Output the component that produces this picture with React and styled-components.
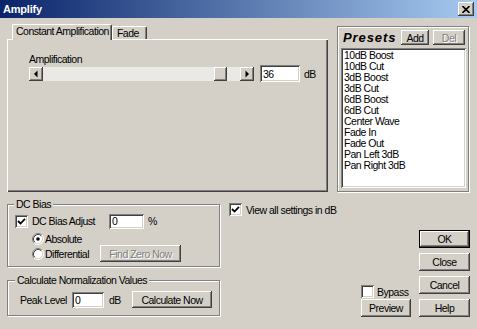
import React from 'react';
import styled, { createGlobalStyle, css } from 'styled-components';

const FACE = '#d4d0c8';

const GlobalStyle = createGlobalStyle`
  html, body {
    margin: 0;
    padding: 0;
    background: ${FACE};
  }
  body {
    font-family: "Liberation Sans", Arial, sans-serif;
    font-size: 10.5px;
    letter-spacing: -0.5px;
    color: #000;
  }
  * { box-sizing: border-box; }
`;

const raised = css`
  box-shadow: inset -1px -1px #404040, inset 1px 1px #fff, inset -2px -2px #808080, inset 2px 2px ${FACE};
`;

const sunken = css`
  box-shadow: inset 1px 1px #808080, inset -1px -1px #fff, inset 2px 2px #404040, inset -2px -2px ${FACE};
`;

const presets = [
  '10dB Boost', '10dB Cut', '3dB Boost', '3dB Cut', '6dB Boost', '6dB Cut',
  'Center Wave', 'Fade In', 'Fade Out', 'Pan Left 3dB', 'Pan Right 3dB',
];

const amp = { value: 36, min: -40, max: 42 };

const Window = styled.div`
  width: 477px;
  height: 329px;
  background: ${FACE};
  display: flex;
  flex-direction: column;
  overflow: hidden;
`;

const TitleBar = styled.div`
  height: 18px;
  flex-shrink: 0;
  display: flex;
  align-items: center;
  justify-content: space-between;
  padding: 0 3px;
  background: linear-gradient(to right, #0a246a, #a6caf0);
`;

const Title = styled.span`
  font-weight: bold;
  font-size: 11px;
  letter-spacing: -0.2px;
  color: #fff;
`;

const CloseButton = styled.div`
  width: 16px;
  height: 14px;
  background: ${FACE};
  ${raised}
  display: flex;
  align-items: center;
  justify-content: center;
`;

const Body = styled.div`
  flex: 1;
  display: flex;
  flex-direction: column;
  padding: 6px 7px 0 7px;
`;

const TopRow = styled.div`
  display: flex;
  height: 168px;
  gap: 9px;
`;

const TabArea = styled.div`
  width: 321px;
  display: flex;
  flex-direction: column;
`;

const TabStrip = styled.div`
  display: flex;
  align-items: flex-end;
  height: 15px;
  padding-left: 5px;
`;

const Tab = styled.div`
  position: relative;
  background: ${FACE};
  line-height: 12px;
  border-top: 1px solid #fff;
  border-left: 1px solid #fff;
  border-right: 1px solid #404040;
  box-shadow: inset -1px 0 #808080;
  border-radius: 2px 2px 0 0;
  white-space: nowrap;
  ${p => p.$active ? css`
    z-index: 1;
    height: 16px;
    margin-bottom: -1px;
    padding: 0 2px 0 3px;
  ` : css`
    height: 13px;
    padding: 0 7px 0 4px;
  `}
`;

const TabPanel = styled.div`
  flex: 1;
  background: ${FACE};
  box-shadow: inset 1px 1px #fff, inset -1px -1px #404040, inset -2px -2px #808080;
  padding: 14px 0 0 22px;
`;

const FieldLabel = styled.div`
  line-height: 12px;
`;

const SliderRow = styled.div`
  display: flex;
  align-items: center;
  height: 17px;
`;

const Slider = styled.div`
  width: 225px;
  height: 14px;
  display: flex;
`;

const ArrowButton = styled.div`
  width: 14px;
  height: 14px;
  flex-shrink: 0;
  background: ${FACE};
  ${raised}
`;

const Track = styled.div`
  flex: 1;
  display: flex;
  background: #ebe9e5;
`;

const Thumb = styled.div`
  width: 13px;
  height: 14px;
  background: ${FACE};
  ${raised}
`;

const TextField = styled.input`
  font: inherit;
  letter-spacing: inherit;
  color: #000;
  width: ${p => p.$w}px;
  height: ${p => p.$h || 16}px;
  margin: 0 0 0 ${p => p.$ml || 0}px;
  padding: 0 3px;
  border: none;
  outline: none;
  background: #fff;
  ${sunken}
`;

const Unit = styled.span`
  margin-left: ${p => p.$ml || 4}px;
  width: ${p => (p.$w ? `${p.$w}px` : 'auto')};
`;

const PresetsBox = styled.div`
  width: 132px;
  margin-top: 2px;
  border: 1px solid #808080;
  box-shadow: inset 1px 1px #fff, 1px 1px #fff;
  display: flex;
  flex-direction: column;
  padding: 3px 2px 3px 3px;
`;

const PresetsHeader = styled.div`
  display: flex;
  align-items: center;
  height: 15px;
  padding: 0 1px 0 2px;
`;

const PresetsTitle = styled.span`
  flex: 1;
  font-weight: bold;
  font-style: italic;
  font-size: 13px;
  letter-spacing: 0.9px;
`;

const List = styled.div`
  flex: 1;
  margin-top: 3px;
  background: #fff;
  ${sunken}
  padding: 2px 3px;
`;

const ListItem = styled.div`
  line-height: 11px;
  white-space: nowrap;
`;

const Button = styled.button`
  font: inherit;
  letter-spacing: inherit;
  color: #000;
  background: ${FACE};
  border: none;
  padding: 0;
  width: ${p => p.$w}px;
  height: ${p => p.$h || 18}px;
  margin-left: ${p => p.$ml || 0}px;
  ${raised}
  ${p => p.$default && css`border: 1px solid #000;`}
  ${p => p.disabled && css`
    color: #808080;
    text-shadow: 1px 1px #fff;
  `}
`;

const BottomRow = styled.div`
  display: flex;
  margin-top: 6px;
`;

const LeftCol = styled.div`
  width: 213px;
  display: flex;
  flex-direction: column;
`;

const Group = styled.fieldset`
  margin: ${p => p.$mt || 0}px 0 0 0;
  min-width: 0;
  padding: ${p => p.$pad};
  border: 1px solid #808080;
  box-shadow: inset 1px 1px #fff, 1px 1px #fff;
`;

const Legend = styled.legend`
  padding: 0 2px;
  margin-left: -1px;
  line-height: 12px;
  background: ${FACE};
`;

const Row = styled.div`
  display: flex;
  align-items: center;
  height: ${p => p.$h}px;
  margin-top: ${p => p.$mt || 0}px;
  padding-left: ${p => p.$indent || 0}px;
`;

const BoxLabel = styled.span`
  margin-left: ${p => p.$ml || 4}px;
  width: ${p => (p.$w ? `${p.$w}px` : 'auto')};
  flex-shrink: 0;
  white-space: nowrap;
`;

const Check = styled.span`
  width: 13px;
  height: 13px;
  flex-shrink: 0;
  background: #fff;
  ${sunken}
  display: flex;
  align-items: center;
  justify-content: center;
`;

const MidCol = styled.div`
  flex: 1;
  display: flex;
  flex-direction: column;
  padding: 5px 8px 0 9px;
`;

const BypassBlock = styled.div`
  margin-top: auto;
  align-self: flex-end;
  display: flex;
  flex-direction: column;
  gap: 1px;
`;

const RightCol = styled.div`
  width: 51px;
  display: flex;
  flex-direction: column;
  gap: 5px;
  padding-top: 32px;
`;

const CheckBox = ({ checked }) => (
  <Check>
    {checked && (
      <svg width="9" height="9" viewBox="0 0 9 9">
        <path d="M1 4 L3.5 6.5 L8 1.8" stroke="#000" strokeWidth="1.8" fill="none" />
      </svg>
    )}
  </Check>
);

const Radio = ({ checked }) => (
  <svg width="12" height="12" viewBox="0 0 12 12" style={{ flexShrink: 0 }}>
    <circle cx="6" cy="6" r="5" fill="#fff" />
    <path d="M2.11 9.89 A5.5 5.5 0 0 1 9.89 2.11" stroke="#808080" fill="none" />
    <path d="M9.89 2.11 A5.5 5.5 0 0 1 2.11 9.89" stroke="#fff" fill="none" />
    <path d="M2.82 9.18 A4.5 4.5 0 0 1 9.18 2.82" stroke="#404040" fill="none" />
    <path d="M9.18 2.82 A4.5 4.5 0 0 1 2.82 9.18" stroke={FACE} fill="none" />
    {checked && <circle cx="6" cy="6" r="1.8" fill="#000" />}
  </svg>
);

const Arrow = ({ dir }) => (
  <svg width="14" height="14" viewBox="0 0 14 14">
    <polygon
      points={dir === 'left' ? '5,7 8.5,3.5 8.5,10.5' : '9,7 5.5,3.5 5.5,10.5'}
      fill="#000"
    />
  </svg>
);

export default function App() {
  const pct = (amp.value - amp.min) / (amp.max - amp.min);

  return (
    <Window>
      <GlobalStyle />
      <TitleBar>
        <Title>Amplify</Title>
        <CloseButton>
          <svg width="8" height="7" viewBox="0 0 8 7">
            <path d="M0.5 0 L7.5 7 M7.5 0 L0.5 7" stroke="#000" strokeWidth="1.6" />
          </svg>
        </CloseButton>
      </TitleBar>

      <Body>
        <TopRow>
          <TabArea>
            <TabStrip>
              <Tab $active>Constant Amplification</Tab>
              <Tab>Fade</Tab>
            </TabStrip>
            <TabPanel>
              <FieldLabel>Amplification</FieldLabel>
              <SliderRow>
                <Slider>
                  <ArrowButton><Arrow dir="left" /></ArrowButton>
                  <Track>
                    <Thumb style={{ marginLeft: `calc((100% - 13px) * ${pct})` }} />
                  </Track>
                  <ArrowButton><Arrow dir="right" /></ArrowButton>
                </Slider>
                <TextField $w={40} $h={17} $ml={6} readOnly value={amp.value} />
                <Unit>dB</Unit>
              </SliderRow>
            </TabPanel>
          </TabArea>

          <PresetsBox>
            <PresetsHeader>
              <PresetsTitle>Presets</PresetsTitle>
              <Button $w={28} $h={15}>Add</Button>
              <Button $w={32} $h={15} $ml={4} disabled>Del</Button>
            </PresetsHeader>
            <List>
              {presets.map(p => <ListItem key={p}>{p}</ListItem>)}
            </List>
          </PresetsBox>
        </TopRow>

        <BottomRow>
          <LeftCol>
            <Group $pad="3px 6px 4px 7px">
              <Legend>DC Bias</Legend>
              <Row $h={16}>
                <CheckBox checked />
                <BoxLabel $w={77}>DC Bias Adjust</BoxLabel>
                <TextField $w={35} $h={15} readOnly value="0" />
                <Unit>%</Unit>
              </Row>
              <Row $h={12} $mt={4} $indent={17}>
                <Radio checked />
                <BoxLabel $ml={1}>Absolute</BoxLabel>
              </Row>
              <Row $h={17} $indent={17}>
                <Radio />
                <BoxLabel $ml={1} $w={55}>Differential</BoxLabel>
                <Button $w={81} $h={17} disabled>Find Zero Now</Button>
              </Row>
            </Group>

            <Group $mt={7} $pad="5px 6px 7px 8px">
              <Legend>Calculate Normalization Values</Legend>
              <Row $h={17}>
                <BoxLabel $ml={0} $w={52}>Peak Level</BoxLabel>
                <TextField $w={32} readOnly value="0" />
                <Unit $ml={5} $w={23}>dB</Unit>
                <Button $w={80} $h={17}>Calculate Now</Button>
              </Row>
            </Group>
          </LeftCol>

          <MidCol>
            <Row $h={13}>
              <CheckBox checked />
              <BoxLabel>View all settings in dB</BoxLabel>
            </Row>
            <BypassBlock>
              <Row $h={13}>
                <CheckBox />
                <BoxLabel $ml={3}>Bypass</BoxLabel>
              </Row>
              <Button $w={50}>Preview</Button>
            </BypassBlock>
          </MidCol>

          <RightCol>
            <Button $w={51} $default>OK</Button>
            <Button $w={51}>Close</Button>
            <Button $w={51}>Cancel</Button>
            <Button $w={51}>Help</Button>
          </RightCol>
        </BottomRow>
      </Body>
    </Window>
  );
}
